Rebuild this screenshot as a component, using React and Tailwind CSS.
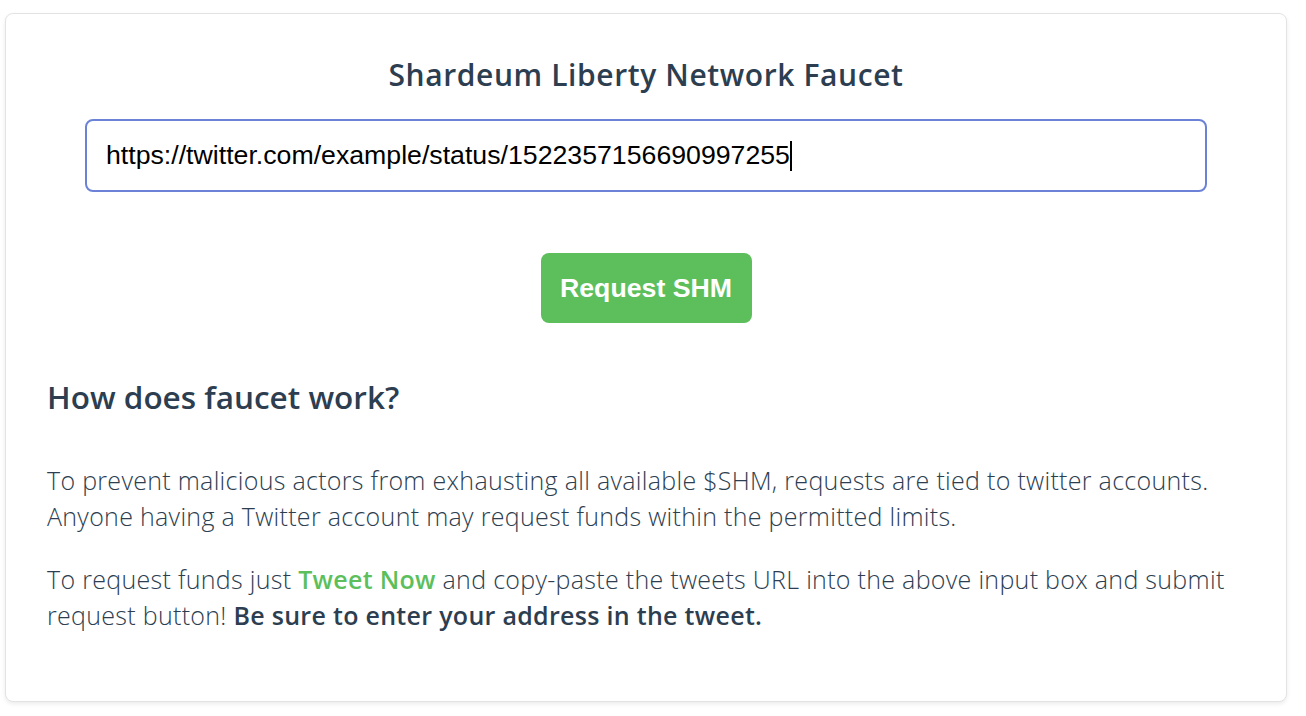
export default function App() {
  return (
    <div className="min-h-[716px] bg-white pt-[13px] px-[5px]" style={{ fontFamily: '"Open Sans", Lato, sans-serif' }}>
      <div className="w-[1282px] h-[689px] rounded-lg border border-[#e3e3e3] bg-white shadow-[0_2px_4px_rgba(0,0,0,0.08)] px-[41px]">
        <h1 className="pt-[42px] text-center text-[30px] tracking-[0.6px] font-semibold text-[#2c3e50] leading-[38px]">
          Shardeum Liberty Network Faucet
        </h1>
        <div className="mt-[25px] px-[38px]">
          <div className="h-[73px] rounded-lg border-2 border-[#6b82d6] flex items-center pl-[19px]">
            <span className="text-[26.7px] text-black" style={{ fontFamily: '"Liberation Sans", Arial, sans-serif' }}>
              https://twitter.com/example/status/1522357156690997255
            </span>
            <span className="w-[2px] h-[30px] bg-black" />
          </div>
        </div>
        <div className="flex justify-center mt-[61px]">
          <button
            className="w-[211px] h-[70px] rounded-lg bg-[#5cbf5c] text-white text-[26.7px] font-bold"
            style={{ fontFamily: '"Liberation Sans", Arial, sans-serif' }}
          >
            Request SHM
          </button>
        </div>
        <h2 className="mt-[55px] text-[31.5px] font-semibold text-[#2c3e50] leading-[38px]">How does faucet work?</h2>
        <div className="mt-[46px] text-[25px] tracking-[0.3px] font-light text-[#2c3e50] leading-[36px]">
          <p>
            To prevent malicious actors from exhausting all available $SHM, requests are tied to twitter accounts.
            <br />
            Anyone having a Twitter account may request funds within the permitted limits.
          </p>
          <p className="mt-[27px]">
            To request funds just <span className="font-semibold text-[#5cbf5c]">Tweet Now</span> and copy-paste the tweets URL into the above input box and submit
            <br />
            request button! <span className="font-semibold">Be sure to enter your address in the tweet.</span>
          </p>
        </div>
      </div>
    </div>
  );
}
